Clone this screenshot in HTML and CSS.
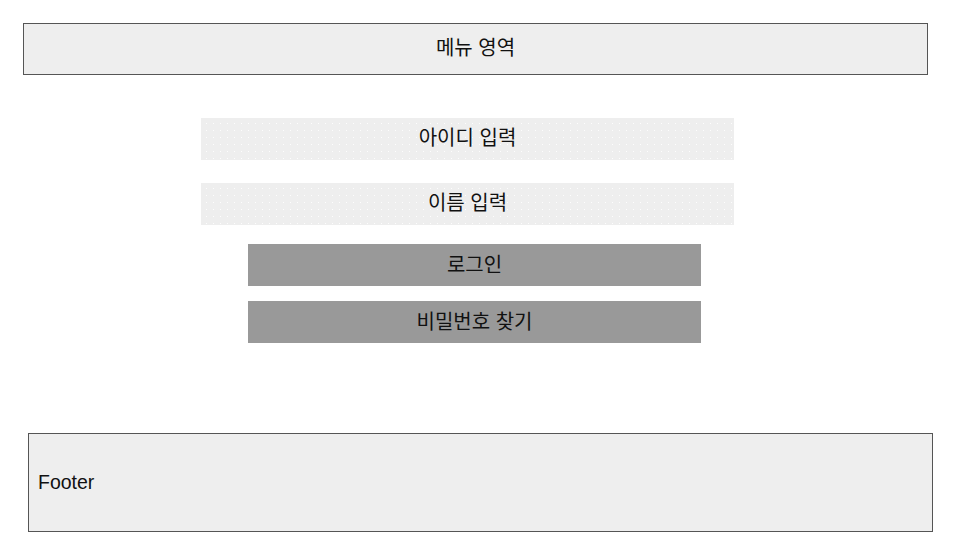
FILE: index.html
```html
<!DOCTYPE html>
<html lang="ko">
<head>
<meta charset="utf-8">
<title>로그인</title>
<link rel="stylesheet" href="styles.css">
</head>
<body>
<div class="page">
  <header class="menu">메뉴 영역</header>
  <main class="form">
    <div class="field field-id">아이디 입력</div>
    <div class="field field-name">이름 입력</div>
    <div class="btn btn-login">로그인</div>
    <div class="btn btn-find">비밀번호 찾기</div>
  </main>
  <footer class="footer">Footer</footer>
</div>
</body>
</html>
```

FILE: styles.css
```css
html, body {
  margin: 0;
  padding: 0;
  background: #ffffff;
}

body {
  font-family: "Liberation Sans", "Noto Sans CJK KR", Arial, sans-serif;
  font-size: 20px;
  color: #111111;
}

.page {
  display: flex;
  flex-direction: column;
  align-items: flex-start;
  padding-top: 23px;
  width: 960px;
  height: 540px;
  box-sizing: border-box;
}

.menu {
  margin-left: 23px;
  width: 905px;
  height: 52px;
  box-sizing: border-box;
  border: 1px solid #555555;
  background: #eeeeee;
  display: flex;
  align-items: center;
  justify-content: center;
  padding-bottom: 6px;
}

.form {
  display: flex;
  flex-direction: column;
  align-items: flex-start;
  margin-top: 43px;
}

.field {
  width: 533px;
  height: 42px;
  margin-left: 201px;
  background-color: #eeeeee;
  background-image: radial-gradient(circle, rgba(255,255,255,0.9) 0.6px, transparent 0.9px);
  background-size: 7px 7px;
  background-position: 2px 2px;
  display: flex;
  align-items: center;
  justify-content: center;
  padding-bottom: 5px;
  box-sizing: border-box;
}

.field-name {
  margin-top: 23px;
}

.btn {
  width: 453px;
  height: 42px;
  margin-left: 248px;
  background: #999999;
  display: flex;
  align-items: center;
  justify-content: center;
  padding-bottom: 4px;
  box-sizing: border-box;
}

.btn-login {
  margin-top: 19px;
}

.btn-find {
  margin-top: 15px;
}

.footer {
  margin-top: 90px;
  margin-left: 28px;
  width: 905px;
  height: 99px;
  box-sizing: border-box;
  border: 1px solid #555555;
  background: #eeeeee;
  display: flex;
  align-items: center;
  padding-left: 9px;
  font-size: 19.5px;
}
```
